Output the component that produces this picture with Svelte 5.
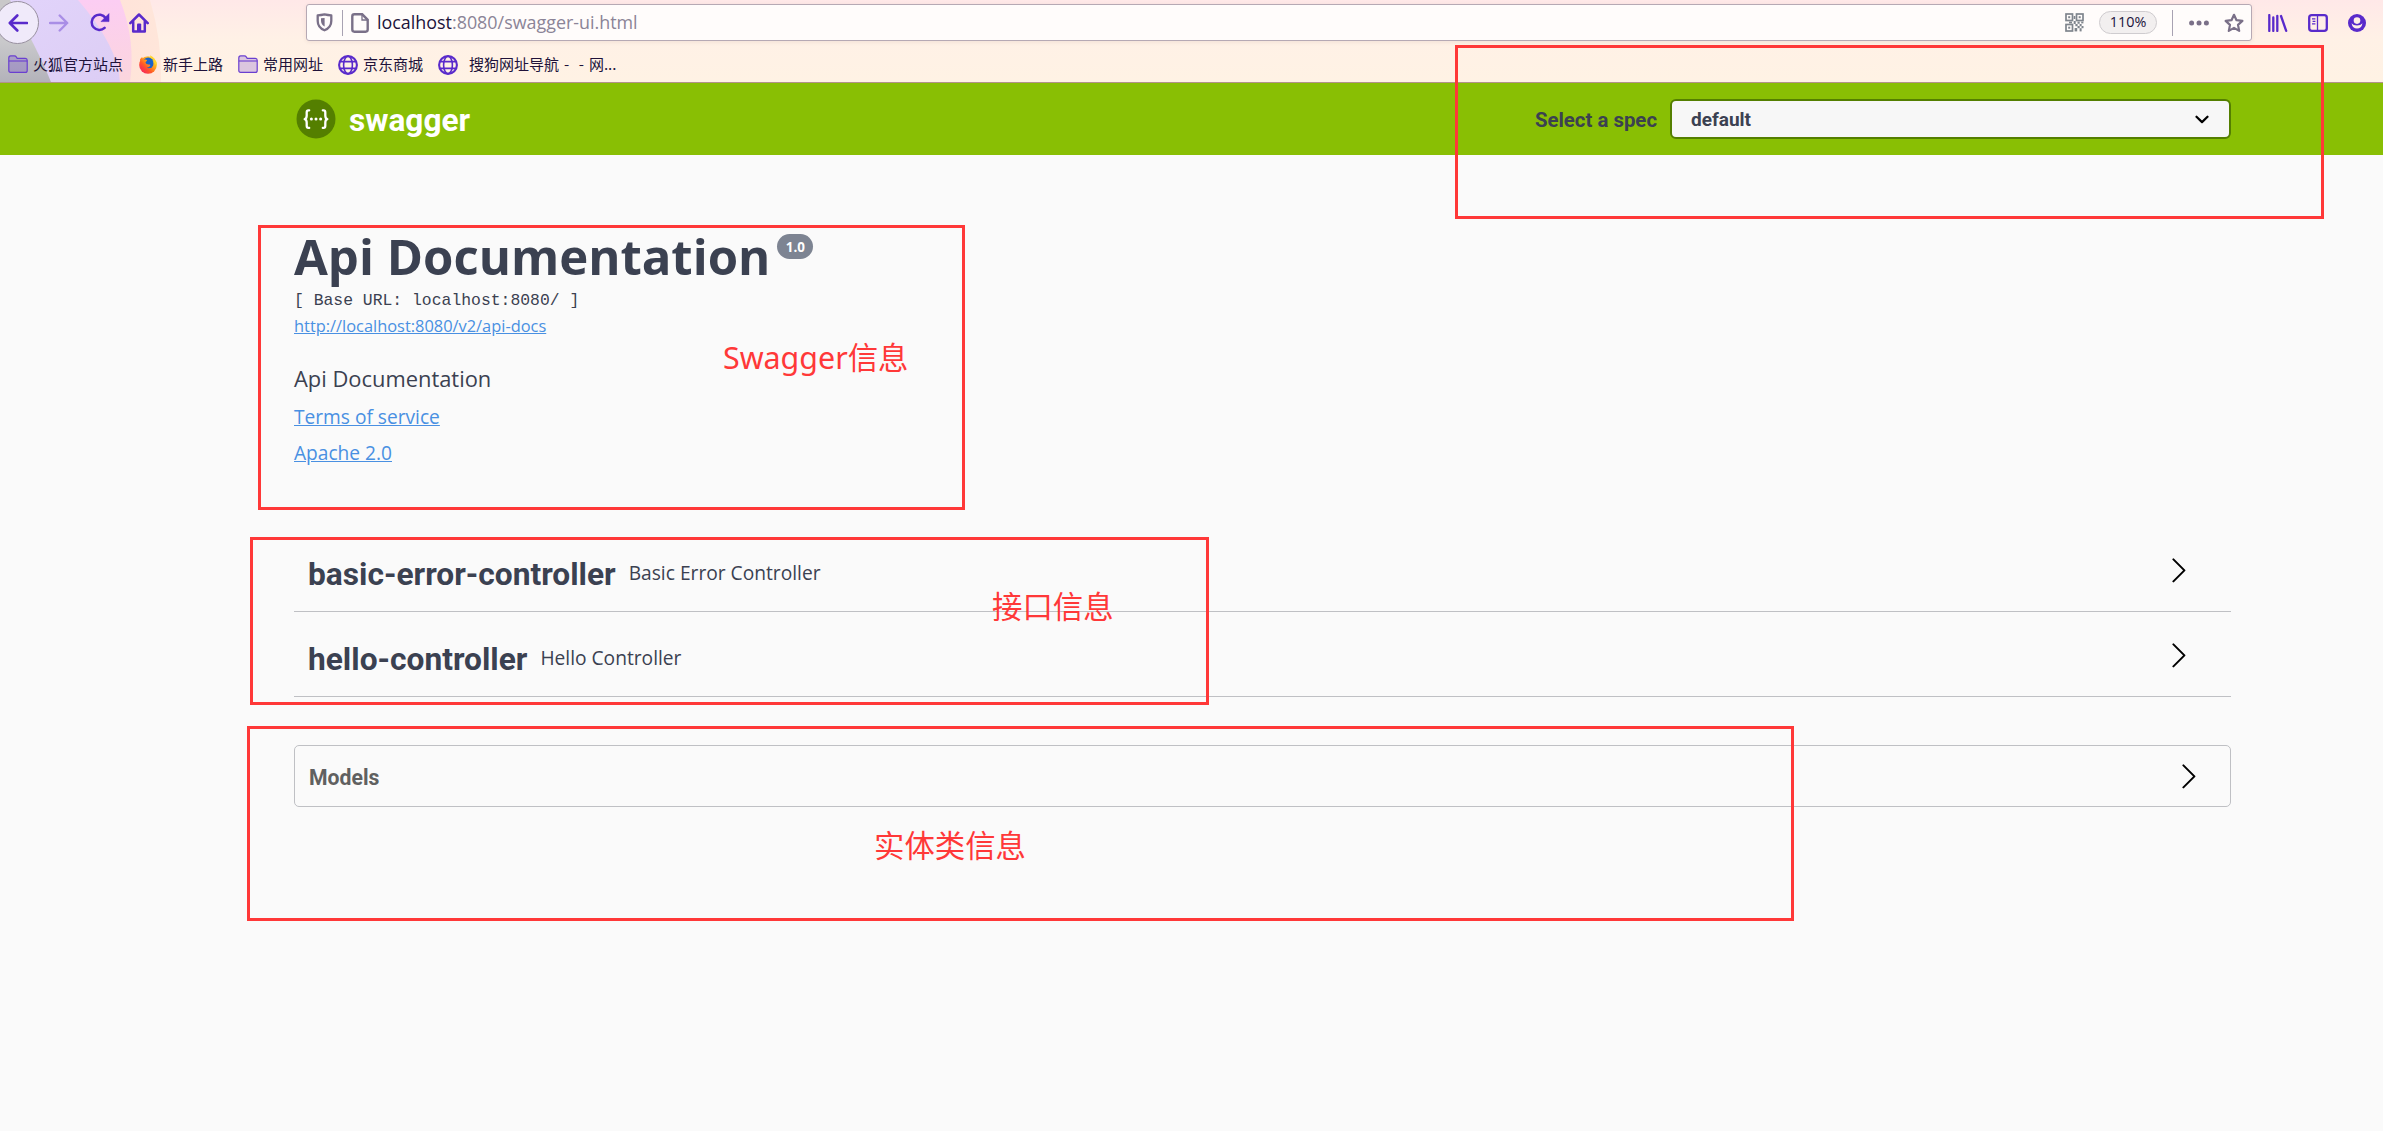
<script>
  const controllers = [
    { name: 'basic-error-controller', description: 'Basic Error Controller' },
    { name: 'hello-controller', description: 'Hello Controller' }
  ];

  const bookmarks = [
    { icon: 'folder', label: '火狐官方站点' },
    { icon: 'firefox', label: '新手上路' },
    { icon: 'folder', label: '常用网址' },
    { icon: 'globe', label: '京东商城' },
    { icon: 'globe', label: '搜狗网址导航 -  - 网...', spaced: true }
  ];
</script>

{#snippet arrow()}
  <svg class="arrow" width="15" height="25" viewBox="0 0 15 25">
    <path d="M1.4 1.4L12.4 12.4L1.4 23.4" fill="none" stroke="#000" stroke-width="2" stroke-linecap="round" stroke-linejoin="round" />
  </svg>
{/snippet}

<div class="page">
  <header class="chrome">
    <svg class="theme" width="240" height="82" viewBox="0 0 240 82">
      <defs>
        <linearGradient id="grey" x1="0" y1="0" x2="0" y2="1">
          <stop offset="0" stop-color="#c9c8c9" />
          <stop offset=".5" stop-color="#c9c9cb" />
          <stop offset="1" stop-color="#b3b2ba" />
        </linearGradient>
        <linearGradient id="lavender" x1="0" y1="0" x2="1" y2="1">
          <stop offset="0" stop-color="#e2d4fb" />
          <stop offset="1" stop-color="#dccdf4" />
        </linearGradient>
        <linearGradient id="pink" x1="0" y1="0" x2="0" y2="1">
          <stop offset="0" stop-color="#fccdf3" />
          <stop offset="1" stop-color="#fbd6dd" />
        </linearGradient>
        <linearGradient id="peach" x1="0" y1="0" x2="1" y2="0">
          <stop offset="0" stop-color="#ffdcd8" />
          <stop offset="1" stop-color="#ffe6da" />
        </linearGradient>
      </defs>
      <path d="M0 0H150Q162 40 161 82H0Z" fill="url(#peach)" />
      <path d="M0 0H120Q136 40 130 82H0Z" fill="url(#pink)" />
      <path d="M0 0H78Q118 46 120 82H0Z" fill="url(#lavender)" />
      <path d="M0 0H10Q38 50 51 82H0Z" fill="url(#grey)" />
    </svg>

    <div class="toolbar">
      <nav class="nav">
        <span class="back">
          <svg width="20" height="18" viewBox="0 0 20 18"><path d="M9.3 1.5L1.8 9L9.3 16.5M2 9H19" fill="none" stroke="#592acb" stroke-width="2.6" stroke-linecap="round" stroke-linejoin="round" /></svg>
        </span>
        <svg class="forward" width="20" height="18" viewBox="0 0 20 18"><path d="M10.7 1.5L18.2 9L10.7 16.5M18 9H1" fill="none" stroke="#a98ee6" stroke-width="2.4" stroke-linecap="round" stroke-linejoin="round" /></svg>
        <svg class="reload" width="20" height="19" viewBox="0 0 20 19">
          <path d="M14.6 14.8A7.6 7.6 0 1 1 15.6 5" fill="none" stroke="#592acb" stroke-width="2.5" stroke-linecap="round" />
          <path d="M19 .6V8.6H11Z" fill="#592acb" stroke="#592acb" stroke-width=".6" stroke-linejoin="round" />
        </svg>
        <svg width="20" height="20" viewBox="0 0 20 20">
          <path d="M1.3 10.2L10 1.5L18.7 10.2M4.2 8.5V18.6H15.8V8.5" fill="none" stroke="#592acb" stroke-width="2.5" stroke-linecap="round" stroke-linejoin="round" />
          <path d="M8 18V11.5Q8 10.6 9 10.6H11.2Q12.2 10.6 12.2 11.5V18Z" fill="#592acb" />
        </svg>
      </nav>

      <div class="urlbar">
        <svg width="17" height="19" viewBox="0 0 17 19">
          <path d="M8.5 1.3Q12 2 15.3 2.4V8Q15.3 14.4 8.5 17.3Q1.7 14.4 1.7 8V2.4Q5 2 8.5 1.3Z" fill="none" stroke="#7a7088" stroke-width="2.3" stroke-linejoin="round" />
          <path d="M8.6 5V13.6Q5.2 11.8 5 8V5.3Z" fill="#7a7088" />
        </svg>
        <i class="sep left"></i>
        <svg class="doc" width="18" height="20" viewBox="0 0 18 20">
          <path d="M3.4 1.3H11.2L16.7 6.8V16.6Q16.7 18.7 14.6 18.7H3.4Q1.3 18.7 1.3 16.6V3.4Q1.3 1.3 3.4 1.3Z" fill="none" stroke="#7a7088" stroke-width="2.4" />
          <path d="M11 1.5V7H16.5" fill="none" stroke="#7a7088" stroke-width="1.3" />
        </svg>
        <span class="url"><b>localhost</b>:8080/swagger-ui.html</span>
        <svg class="qr" width="19" height="19" viewBox="0 0 19 19">
          <g fill="none" stroke="#7f858d" stroke-width="1.7">
            <rect x="1" y="1" width="6.5" height="6.5" /><rect x="11.5" y="1" width="6.5" height="6.5" /><rect x="1" y="11.5" width="6.5" height="6.5" />
          </g>
          <g fill="#7f858d">
            <rect x="3.2" y="3.2" width="2" height="2" /><rect x="13.7" y="3.2" width="2" height="2" /><rect x="3.2" y="13.7" width="2" height="2" />
            <rect x="8.7" y="3" width="1.6" height="3" /><rect x="8.7" y="8" width="2" height="3" /><rect x="4" y="8.6" width="3" height="1.8" /><rect x="12.5" y="8.6" width="2.2" height="2.2" /><rect x="16.2" y="8.6" width="2.2" height="1.8" />
            <rect x="10.4" y="11" width="2.2" height="2.2" /><rect x="14.6" y="11" width="2" height="2.2" /><rect x="12.5" y="13" width="2.2" height="2.2" /><rect x="16.5" y="13" width="2" height="2.2" /><rect x="9.6" y="15" width="2.6" height="3.4" /><rect x="14.6" y="15.2" width="2" height="3.2" />
          </g>
        </svg>
        <span class="zoom">110%</span>
        <i class="sep right"></i>
        <svg class="dots" width="20" height="6" viewBox="0 0 20 6"><g fill="#7a7088"><circle cx="2.6" cy="3" r="2.5" /><circle cx="10" cy="3" r="2.5" /><circle cx="17.4" cy="3" r="2.5" /></g></svg>
        <svg width="20" height="20" viewBox="0 0 20 20"><path d="M10 1.8L12.5 7.2L18.4 7.9L14 11.9L15.2 17.9L10 14.9L4.8 17.9L6 11.9L1.6 7.9L7.5 7.2Z" fill="none" stroke="#7a7088" stroke-width="2.2" stroke-linejoin="round" /></svg>
      </div>

      <div class="tools">
        <svg width="20" height="18" viewBox="0 0 20 18"><path d="M1.3 1V17M5.3 3.5V17M9.3 1.8V17M13 2L18.2 16.8" fill="none" stroke="#592acb" stroke-width="2.3" stroke-linecap="round" /></svg>
        <svg width="20" height="18" viewBox="0 0 20 18">
          <rect x="1.2" y="1.2" width="17.6" height="15.6" rx="2.6" fill="none" stroke="#592acb" stroke-width="2.3" />
          <path d="M9.5 1.5V16.5" stroke="#592acb" stroke-width="1.3" />
          <path d="M4 4.8H7.4M4.6 7.3H7.4M4 9.8H7.4" stroke="#592acb" stroke-width="1.2" />
        </svg>
        <svg width="18" height="18" viewBox="0 0 18 18">
          <circle cx="9" cy="9" r="9" fill="#592acb" />
          <circle cx="9" cy="6.6" r="3.3" fill="#ffeee8" />
          <path d="M3.5 9.3Q4.5 14.5 9 14.5T14.5 9.3Q12.6 11.6 9 11.6T3.5 9.3Z" fill="#ffeee8" />
        </svg>
      </div>
    </div>

    <div class="bookmarks">
      {#each bookmarks as item}
        <span class="bookmark {item.icon}" class:spaced={item.spaced}>
          {#if item.icon === 'folder'}
            <svg width="20" height="19" viewBox="0 0 20 19">
              <path d="M.8 3Q.8 .9 2.6 .9H6.4Q7.6 .9 8.4 2.1L9.2 3.3H17.4Q19.2 3.3 19.2 5.2V15.4Q19.2 17.4 17.4 17.4H2.6Q.8 17.4 .8 15.4Z" fill="#592acb" fill-opacity=".22" stroke="#6a3fd0" stroke-width="1.2" />
              <path d="M.8 6H19.2" stroke="#6a3fd0" stroke-width="1.1" />
            </svg>
          {:else if item.icon === 'globe'}
            <svg width="20" height="20" viewBox="0 0 20 20">
              <g fill="none" stroke="#592acb">
                <circle cx="10" cy="10" r="8.9" stroke-width="2.1" />
                <ellipse cx="10" cy="10" rx="4.4" ry="8.8" stroke-width="1.6" />
                <path d="M2 6.6H18M2 13.4H18" stroke-width="1.6" />
              </g>
            </svg>
          {:else}
            <svg width="18" height="19" viewBox="0 0 18 19">
              <defs>
                <linearGradient id="flame" x1="1" y1="0" x2=".1" y2="1">
                  <stop offset="0" stop-color="#fff04a" />
                  <stop offset=".35" stop-color="#ffb01c" />
                  <stop offset=".65" stop-color="#ff5b25" />
                  <stop offset="1" stop-color="#f4156c" />
                </linearGradient>
              </defs>
              <circle cx="9" cy="10" r="8.8" fill="url(#flame)" />
              <path d="M11 .2Q17.5 3.4 17.8 10L13 8Z" fill="#ffd52e" />
              <circle cx="9.2" cy="8.2" r="5.6" fill="#1a62c9" />
              <path d="M1 4.5Q2 2.6 3.2 2Q3.2 4.4 5.4 4.6Q7.4 4.4 8.2 5.2L6.4 7.6Q7 9.6 9.4 9.6Q11 9 11.4 10.2Q10.4 12.6 7.8 12.4Q11.8 14.8 14.6 10.4Q15 7 13.4 5Q17 7.6 16 12.2L9 17L2 13Z" fill="url(#flame)" />
            </svg>
          {/if}
          <span>{item.label}</span>
        </span>
      {/each}
    </div>
  </header>

  <div class="topbar">
    <svg class="mark" width="40" height="40" viewBox="0 0 40 40">
      <circle cx="20" cy="20" r="19.5" fill="#547f00" />
      <g fill="none" stroke="#fff" stroke-width="2.3" stroke-linecap="round" stroke-linejoin="round">
        <path d="M13.2 11.3H12.4Q10.7 11.3 10.7 13.4V16.4Q10.7 19.6 8.7 20.1Q10.7 20.6 10.7 23.8V26.8Q10.7 28.9 12.4 28.9H13.2" />
        <path d="M26.8 11.3H27.6Q29.3 11.3 29.3 13.4V16.4Q29.3 19.6 31.3 20.1Q29.3 20.6 29.3 23.8V26.8Q29.3 28.9 27.6 28.9H26.8" />
      </g>
      <g fill="#fff"><circle cx="15.4" cy="20.1" r="1.5" /><circle cx="20" cy="20.1" r="1.5" /><circle cx="24.6" cy="20.1" r="1.5" /></g>
    </svg>
    <span class="brand">swagger</span>
    <span class="spec-label">Select a spec</span>
    <div class="select">
      <span>default</span>
      <svg width="14" height="9" viewBox="0 0 14 9"><path d="M1.5 1.7L7 7.1L12.5 1.7" fill="none" stroke="#000" stroke-width="2.2" stroke-linecap="round" stroke-linejoin="round" /></svg>
    </div>
  </div>

  <main>
    <section class="info">
      <div class="title">
        <h1>Api Documentation</h1>
        <span class="version">1.0</span>
      </div>
      <div class="base">[ Base URL: localhost:8080/ ]</div>
      <div class="docs"><a href="#docs">http://localhost:8080/v2/api-docs</a></div>
      <p>Api Documentation</p>
      <div class="link"><a href="#terms">Terms of service</a></div>
      <div class="link"><a href="#license">Apache 2.0</a></div>
    </section>

    <section>
      {#each controllers as c}
        <div class="tag">
          <h2>{c.name}</h2>
          <small>{c.description}</small>
          {@render arrow()}
        </div>
      {/each}
    </section>

    <section class="models">
      <h3>Models</h3>
      {@render arrow()}
    </section>
  </main>

  <div class="note spec"></div>
  <div class="note about"><span>Swagger信息</span></div>
  <div class="note api"><span>接口信息</span></div>
  <div class="note entity"><span>实体类信息</span></div>
</div>

<style>
  :global(body) { margin: 0; background: #fafafa; }
  .page {
    position: relative;
    height: 1131px;
    overflow: hidden;
    background: #fafafa;
    color: #3b4151;
    font-family: 'Open Sans', 'Noto Sans CJK SC', sans-serif;
  }
  .page * { box-sizing: border-box; }
  svg { display: block; flex: none; }
  h1, h2, h3, p { margin: 0; }

  /* browser chrome */
  .chrome {
    position: relative;
    height: 83px;
    border-bottom: 1px solid #b3938a;
    background: linear-gradient(#ffe8e8, #fff1e6 48%, #fff2e4);
  }
  .theme { position: absolute; left: 0; top: 0; }
  .toolbar { position: relative; display: flex; align-items: center; height: 45px; }
  .nav { display: flex; align-items: center; width: 306px; flex: none; }
  .back {
    display: flex;
    align-items: center;
    justify-content: center;
    width: 43px;
    height: 43px;
    margin-left: -4px;
    border: 1px solid #98909f;
    border-radius: 50%;
    background: #f0eafa;
  }
  .forward { margin-left: 10px; }
  .reload { margin: 0 19px 0 21px; }
  .urlbar {
    display: flex;
    align-items: center;
    width: 1946px;
    height: 37px;
    padding: 0 7px 0 9px;
    border: 1px solid #b6a9b4;
    border-radius: 3px;
    background: #fffcfb;
    box-shadow: 0 1px 4px rgba(80, 30, 20, .08);
  }
  .sep { width: 1px; height: 26px; background: #a8a2b2; }
  .sep.left { margin: 0 8px 0 9px; }
  .sep.right { margin: 0 16px 0 15px; }
  .url {
    flex: 1;
    padding: 0 0 1px 8px;
    color: #8b8497;
    font-size: 17.9px;
    line-height: 24px;
  }
  .url b { color: #20123a; font-weight: 400; }
  .zoom {
    width: 58px;
    height: 23px;
    margin-left: 15px;
    border: 1px solid #cfcccf;
    border-radius: 12px;
    background: #f2efef;
    color: #20123a;
    font-size: 14.4px;
    line-height: 20px;
    text-align: center;
  }
  .dots { margin-right: 15px; }
  .tools { display: flex; align-items: center; gap: 20px; padding-left: 16px; }

  .bookmarks { position: relative; display: flex; height: 37px; padding: 2px 0 0 8px; }
  .bookmark {
    display: flex;
    align-items: center;
    gap: 5px;
    margin-right: 15px;
    color: #20123a;
    font: 15px/20px 'Noto Sans CJK SC', sans-serif;
    white-space: pre;
  }
  .bookmark span { padding-bottom: 1px; }
  .bookmark.firefox { gap: 6px; margin-left: 1px; }
  .bookmark.globe.spaced { gap: 11px; word-spacing: 1.5px; }

  /* swagger bar */
  .topbar {
    display: flex;
    align-items: center;
    height: 72px;
    padding: 0 152px 0 296px;
    background: #89bf04;
    font-family: Roboto, sans-serif;
    font-weight: 700;
  }
  .brand { flex: 1; padding: 3px 0 0 13px; color: #fff; font-size: 31.6px; line-height: 40px; }
  .spec-label { padding: 2px 13px 0 0; font-size: 20.4px; line-height: 30px; }
  .select {
    display: flex;
    align-items: center;
    justify-content: space-between;
    width: 561px;
    height: 40px;
    padding: 0 20px 0 19px;
    border: 2px solid #547f00;
    border-radius: 6px;
    background: #f7f7f7;
    font-size: 19px;
  }

  /* document */
  main { padding: 70px 152px 0 294px; }
  .title { display: flex; height: 60px; }
  h1 { padding-top: 1px; font-size: 49.1px; line-height: 60px; font-weight: 700; }
  .version {
    width: 36px;
    height: 25px;
    margin: 9px 0 0 7px;
    border-radius: 13px;
    background: #7d8492;
    color: #fff;
    font-size: 13.4px;
    line-height: 26px;
    font-weight: 700;
    text-align: center;
  }
  .base { margin-top: 3px; font: 16.4px/26px 'Liberation Mono', monospace; }
  .docs { font-size: 16.4px; line-height: 24px; }
  a { color: #4990e2; text-decoration: underline; }
  .info p { margin-top: 26px; font-size: 21.9px; line-height: 30px; }
  .link { margin-top: 10px; font-size: 19.15px; line-height: 26px; }

  section + section { margin-top: 61px; }
  .tag {
    display: flex;
    align-items: flex-start;
    height: 85px;
    padding: 25px 44px 0 14px;
    border-bottom: 1px solid #bfc0c4;
  }
  h2 { padding-top: 3px; font: 700 31.7px/40px Roboto, sans-serif; }
  small { flex: 1; padding: 1px 0 0 13px; font-size: 19.2px; line-height: 40px; }
  .tag .arrow { margin-top: 6px; }

  section.models {
    display: flex;
    align-items: center;
    justify-content: space-between;
    height: 62px;
    margin-top: 48px;
    padding: 0 33px 0 14px;
    border: 1px solid #bfc0c4;
    border-radius: 5px;
  }
  h3 { padding-top: 4px; color: #606060; font: 700 21.2px/30px Roboto, sans-serif; }

  /* red callouts laid over the page */
  .note {
    position: absolute;
    border: 3px solid #ff3838;
    color: #ff3838;
    font: 30.4px/40px 'Noto Sans', 'Noto Sans CJK SC', sans-serif;
  }
  .note span { position: absolute; white-space: nowrap; }
  .spec { left: 1455px; top: 45px; width: 869px; height: 174px; }
  .about { left: 258px; top: 225px; width: 707px; height: 285px; }
  .about span { left: 462px; top: 110px; }
  .api { left: 250px; top: 537px; width: 959px; height: 168px; }
  .api span { left: 739px; top: 47px; }
  .entity { left: 247px; top: 726px; width: 1547px; height: 195px; }
  .entity span { left: 624px; top: 97px; }
</style>
